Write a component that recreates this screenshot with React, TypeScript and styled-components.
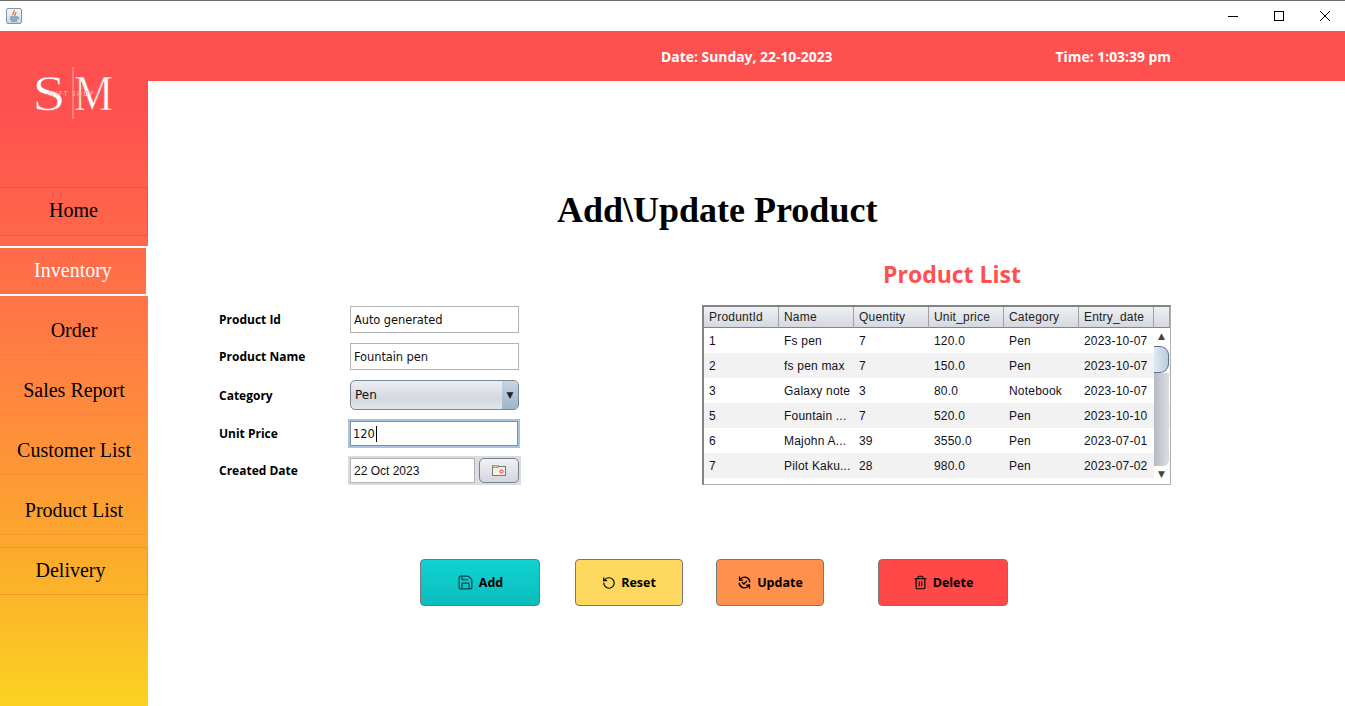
import React from "react";
import styled, { createGlobalStyle } from "styled-components";
import { Save, RotateCcw, Trash2 } from "lucide-react";

const Global = createGlobalStyle`
  html, body { margin: 0; padding: 0; background: #fff; }
  body { overflow: hidden; }
`;

const rows = [
  { id: "1", name: "Fs pen", qty: "7", price: "120.0", cat: "Pen", date: "2023-10-07" },
  { id: "2", name: "fs pen max", qty: "7", price: "150.0", cat: "Pen", date: "2023-10-07" },
  { id: "3", name: "Galaxy note", qty: "3", price: "80.0", cat: "Notebook", date: "2023-10-07" },
  { id: "5", name: "Fountain ...", qty: "7", price: "520.0", cat: "Pen", date: "2023-10-10" },
  { id: "6", name: "Majohn A...", qty: "39", price: "3550.0", cat: "Pen", date: "2023-07-01" },
  { id: "7", name: "Pilot Kaku...", qty: "28", price: "980.0", cat: "Pen", date: "2023-07-02" },
];

const columns = ["ProduntId", "Name", "Quentity", "Unit_price", "Category", "Entry_date"];

const Window = styled.div`
  width: 1345px;
  height: 706px;
  display: flex;
  flex-direction: column;
  overflow: hidden;
`;

const TitleBar = styled.div`
  height: 31px;
  flex: none;
  border-top: 1px solid #6e6e6e;
  box-sizing: border-box;
  background: #fff;
  display: flex;
  align-items: center;
  justify-content: space-between;
  padding: 0 15px 1px 6px;
`;

const AppIcon = styled.div`
  width: 16px;
  height: 16px;
  box-sizing: border-box;
  border: 1px solid #7d97ad;
  border-radius: 2px;
  background: linear-gradient(#f4f7fa, #c9d6e2);
  display: flex;
`;

const WindowButtons = styled.div`
  display: flex;
  gap: 36px;
  align-items: center;
`;

const Body = styled.div`
  flex: 1;
  display: flex;
  min-height: 0;
`;

const Sidebar = styled.nav`
  width: 148px;
  flex: none;
  display: flex;
  flex-direction: column;
  background: linear-gradient(180deg, #ff5050 0%, #ff5050 12%, #ff7a45 45%, #fca62e 75%, #fbd222 100%);
`;

const LogoArea = styled.div`
  height: 156px;
  flex: none;
  display: flex;
  padding: 34px 0 0 33px;
  box-sizing: border-box;
`;

const NavItem = styled.div<{ $variant?: "home" | "delivery" }>`
  height: ${(p) => (p.$variant === "home" ? 49 : 48)}px;
  flex: none;
  margin-bottom: ${(p) => (p.$variant === "home" ? 11 : 12)}px;
  box-sizing: border-box;
  display: flex;
  align-items: center;
  justify-content: center;
  padding-bottom: ${(p) => (p.$variant ? 2 : 0)}px;
  padding-right: ${(p) => (p.$variant === "delivery" ? 6 : 0)}px;
  font: 20px "Liberation Serif", serif;
  color: #000;
  ${(p) =>
    p.$variant === "home"
      ? "border: 1px solid rgba(255, 60, 75, 0.55); border-left: none;"
      : p.$variant === "delivery"
      ? "border: 1px solid rgba(240, 140, 50, 0.75); border-left: none;"
      : "border-bottom: 1px solid rgba(240, 90, 60, 0.2);"}
`;

const ActiveItem = styled.div`
  height: 50px;
  width: 146px;
  flex: none;
  margin: -1px 0 11px;
  box-sizing: border-box;
  border-top: 2px solid #fff;
  border-bottom: 2px solid #fff;
  box-shadow: 2px 0 0 #fff;
  display: flex;
  align-items: center;
  justify-content: center;
  padding-bottom: 2px;
  font: 20px "Liberation Serif", serif;
  color: #fff;
`;

const Main = styled.div`
  flex: 1;
  display: flex;
  flex-direction: column;
  min-width: 0;
`;

const Header = styled.header`
  height: 50px;
  flex: none;
  background: #ff5050;
  display: flex;
  align-items: center;
  color: #fff;
  font: bold 13.9px "Open Sans", sans-serif;
  padding: 1px 0 0 513px;
  box-sizing: border-box;
`;

const HeaderTime = styled.span`
  margin-left: 223px;
`;

const Title = styled.h1`
  margin: 106px 0 0 409px;
  font: bold 36px/46px "Liberation Serif", serif;
  color: #000;
  white-space: nowrap;
`;

const Content = styled.div`
  display: flex;
  margin: 23px 0 0 71px;
`;

const Form = styled.div`
  width: 483px;
  flex: none;
  padding-top: 50px;
  box-sizing: border-box;
`;

const FormRow = styled.div<{ $h: number; $gap: number }>`
  height: ${(p) => p.$h}px;
  margin-bottom: ${(p) => p.$gap}px;
  display: flex;
  align-items: center;
`;

const Label = styled.label`
  width: 130px;
  flex: none;
  font: bold 12px "Open Sans", sans-serif;
  color: #000;
`;

const Field = styled.div<{ $focus?: boolean }>`
  width: ${(p) => (p.$focus ? 172 : 169)}px;
  height: 100%;
  flex: none;
  margin-left: ${(p) => (p.$focus ? "-1px" : "1px")};
  box-sizing: border-box;
  background: #fff;
  border: ${(p) => (p.$focus ? "2px solid #a6c4e2" : "1px solid #b4b4b4")};
  ${(p) => (p.$focus ? "outline: 1px solid #878d95; outline-offset: -3px;" : "")}
  display: flex;
  align-items: center;
  padding-left: 3px;
  font: 11.5px "DejaVu Sans", sans-serif;
  letter-spacing: -0.1px;
  color: #111;
`;

const Caret = styled.span`
  width: 1px;
  height: 16px;
  background: #000;
  margin-left: 1px;
`;

const Select = styled.div`
  width: 169px;
  height: 30px;
  margin-left: 1px;
  box-sizing: border-box;
  border: 1px solid #7b8794;
  border-radius: 5px;
  background: linear-gradient(#eceef2, #d4d8e0 60%, #e2e5ea);
  display: flex;
  align-items: center;
  justify-content: space-between;
  padding-left: 4px;
  overflow: hidden;
  font: 12px "DejaVu Sans", sans-serif;
  color: #111;
`;

const SelectArrow = styled.div`
  width: 16px;
  height: 100%;
  background: linear-gradient(#c6d5e2, #9fb5c9);
  display: flex;
  align-items: center;
  justify-content: center;
  font: 9px "DejaVu Sans", sans-serif;
  color: #222;
`;

const DatePicker = styled.div`
  width: 173px;
  height: 100%;
  margin-left: -1px;
  box-sizing: border-box;
  background: #d9dde3;
  padding: 2px;
  display: flex;
  justify-content: space-between;
`;

const DateInput = styled.div`
  width: 125px;
  box-sizing: border-box;
  background: #fff;
  border: 1px solid #b4b4b4;
  padding-left: 3px;
  display: flex;
  align-items: center;
  font: 12px "Liberation Sans", sans-serif;
  color: #111;
`;

const DateButton = styled.div`
  width: 40px;
  box-sizing: border-box;
  border: 1px solid #77818c;
  border-radius: 5px;
  background: linear-gradient(#f0f1f4, #d2d6dd);
  display: flex;
  align-items: center;
  justify-content: center;
`;

const TableColumn = styled.div`
  width: 469px;
  flex: none;
  display: flex;
  flex-direction: column;
`;

const ListTitle = styled.h2`
  margin: 0 0 13px 181px;
  height: 36px;
  font: bold 23px/36px "Open Sans", sans-serif;
  color: #ff5050;
  white-space: nowrap;
`;

const TableFrame = styled.div`
  height: 180px;
  position: relative;
  box-sizing: border-box;
  border: 2px solid #858585;
  border-right-width: 1px;
  border-right-color: #b0b0b0;
  border-bottom: 1px solid #b0b0b0;
  background: #fff;
  font: 12px "Liberation Sans", sans-serif;
  letter-spacing: 0.2px;
  color: #10101e;
`;

const Grid = styled.div`
  display: grid;
  grid-template-columns: repeat(6, 75px) 1fr;
`;

const HeaderCell = styled.div`
  height: 21px;
  box-sizing: border-box;
  padding: 1px 0 0 5px;
  line-height: 18px;
  background: linear-gradient(#eef0f3, #d5d8df);
  border-right: 1px solid #9a9fa8;
  border-bottom: 1px solid #858585;
  color: #222;
`;

const Cell = styled.div<{ $odd: boolean }>`
  height: 25px;
  line-height: 27px;
  padding-left: 5px;
  white-space: nowrap;
  overflow: hidden;
  background: ${(p) => (p.$odd ? "#f2f2f2" : "#fff")};
`;

const ScrollTrack = styled.div`
  position: absolute;
  top: 21px;
  right: 1px;
  bottom: 0;
  width: 15px;
  display: flex;
  flex-direction: column;
  align-items: center;
  background: #fff;
`;

const ScrollArrow = styled.div`
  height: 18px;
  flex: none;
  font: 9px/16px "DejaVu Sans", sans-serif;
  color: #444;
`;

const ScrollRail = styled.div`
  flex: 1;
  width: 100%;
  background: linear-gradient(90deg, #b6bac3, #dcdee3);
  border-radius: 0 0 6px 0;
`;

const ScrollThumb = styled.div`
  height: 27px;
  width: 100%;
  flex: none;
  box-sizing: border-box;
  background: linear-gradient(90deg, #dfe9f3, #b9cde0);
  border: 1px solid #5e7388;
  border-left: none;
  border-radius: 0 9px 9px 0;
`;

const Actions = styled.div`
  display: flex;
  margin: 74px 0 0 272px;
`;

const ActionButton = styled.button<{ $w: number; $top: string; $bottom: string; $ml: number }>`
  width: ${(p) => p.$w}px;
  height: 47px;
  margin-left: ${(p) => p.$ml}px;
  padding: 0;
  box-sizing: border-box;
  border: 1px solid #777;
  border-radius: 4px;
  background: linear-gradient(${(p) => p.$top}, ${(p) => p.$bottom});
  display: flex;
  align-items: center;
  justify-content: center;
  gap: 5px;
  font: bold 12.5px "Open Sans", sans-serif;
  color: #000;
`;

const Logo = () => (
  <svg width="82" height="56" viewBox="0 0 82 56" fill="none">
    <line x1="40" y1="2" x2="40" y2="54" stroke="#ffb0b0" strokeWidth="1" />
    <text transform="translate(-1 45) scale(1.22 1)" fontFamily="Liberation Serif, serif" fontSize="50" fill="#fff" stroke="#ff5050" strokeWidth="0.7">S</text>
    <text transform="translate(41 45) scale(0.88 1)" fontFamily="Liberation Serif, serif" fontSize="50" fill="#fff" stroke="#ff5050" strokeWidth="0.7">M</text>
    <text x="16" y="31" fontFamily="Open Sans, sans-serif" fontSize="6.5" fontWeight="600" fill="#ffb4b4" letterSpacing="1.5">GIFT SHOP</text>
  </svg>
);

const JavaIcon = () => (
  <svg width="14" height="14" viewBox="0 0 14 14" fill="none">
    <path d="M7 1C8 3 5 4 6 6M9 3C9 5 7 5 8 7" stroke="#e8661c" strokeWidth="1.2" />
    <path d="M3 8h7M3 10h7M4 12h6" stroke="#4a7194" strokeWidth="1" />
    <path d="M10 8c2 0 2 2 0 2" stroke="#4a7194" strokeWidth="1" />
  </svg>
);

const CalendarIcon = () => (
  <svg width="15" height="11" viewBox="0 0 15 11" fill="none">
    <rect x="0.5" y="1.5" width="13" height="9" fill="#f6f1e6" stroke="#77777a" />
    <rect x="0.5" y="0.5" width="6" height="2" fill="#d9c79c" stroke="#77777a" strokeWidth="0.6" />
    <circle cx="9.5" cy="6.5" r="1.6" stroke="#d33" strokeWidth="1" />
  </svg>
);

const UpdateIcon = () => (
  <svg width="15" height="15" viewBox="0 0 24 24" fill="none" stroke="#000" strokeWidth="2" strokeLinecap="round" strokeLinejoin="round">
    <path d="M20.5 11A8.5 8.5 0 0 0 6 6l-2 2" />
    <path d="M4 3v5h5" />
    <path d="M3.5 13A8.5 8.5 0 0 0 18 18l2-2" />
    <path d="M20 21v-5h-5" />
    <path d="M8.5 12l2.5 2.5 4.5-4.5" />
  </svg>
);

const App = () => (
  <Window>
    <Global />
    <TitleBar>
      <AppIcon>
        <JavaIcon />
      </AppIcon>
      <WindowButtons>
        <svg width="10" height="10" viewBox="0 0 10 10">
          <path d="M0 5.5h10" stroke="#000" strokeWidth="1" />
        </svg>
        <svg width="10" height="10" viewBox="0 0 10 10">
          <rect x="0.5" y="0.5" width="9" height="9" fill="none" stroke="#000" strokeWidth="1" />
        </svg>
        <svg width="10" height="10" viewBox="0 0 10 10">
          <path d="M0 0L10 10M10 0L0 10" stroke="#000" strokeWidth="1" />
        </svg>
      </WindowButtons>
    </TitleBar>
    <Body>
      <Sidebar>
        <LogoArea>
          <Logo />
        </LogoArea>
        <NavItem $variant="home">Home</NavItem>
        <ActiveItem>Inventory</ActiveItem>
        <NavItem>Order</NavItem>
        <NavItem>Sales Report</NavItem>
        <NavItem>Customer List</NavItem>
        <NavItem>Product List</NavItem>
        <NavItem $variant="delivery">Delivery</NavItem>
      </Sidebar>
      <Main>
        <Header>
          <span>Date: Sunday, 22-10-2023</span>
          <HeaderTime>Time: 1:03:39 pm</HeaderTime>
        </Header>
        <Title>Add\Update Product</Title>
        <Content>
          <Form>
            <FormRow $h={27} $gap={10}>
              <Label>Product Id</Label>
              <Field>Auto generated</Field>
            </FormRow>
            <FormRow $h={27} $gap={10}>
              <Label>Product Name</Label>
              <Field>Fountain pen</Field>
            </FormRow>
            <FormRow $h={30} $gap={9}>
              <Label>Category</Label>
              <Select>
                Pen
                <SelectArrow>▼</SelectArrow>
              </Select>
            </FormRow>
            <FormRow $h={29} $gap={8}>
              <Label>Unit Price</Label>
              <Field $focus>
                120
                <Caret />
              </Field>
            </FormRow>
            <FormRow $h={29} $gap={0}>
              <Label>Created Date</Label>
              <DatePicker>
                <DateInput>22 Oct 2023</DateInput>
                <DateButton>
                  <CalendarIcon />
                </DateButton>
              </DatePicker>
            </FormRow>
          </Form>
          <TableColumn>
            <ListTitle>Product List</ListTitle>
            <TableFrame>
              <Grid>
                {columns.map((c) => (
                  <HeaderCell key={c}>{c}</HeaderCell>
                ))}
                <HeaderCell />
                {rows.map((r, i) => (
                  <React.Fragment key={r.id}>
                    <Cell $odd={i % 2 === 1}>{r.id}</Cell>
                    <Cell $odd={i % 2 === 1}>{r.name}</Cell>
                    <Cell $odd={i % 2 === 1}>{r.qty}</Cell>
                    <Cell $odd={i % 2 === 1}>{r.price}</Cell>
                    <Cell $odd={i % 2 === 1}>{r.cat}</Cell>
                    <Cell $odd={i % 2 === 1}>{r.date}</Cell>
                    <Cell $odd={i % 2 === 1} />
                  </React.Fragment>
                ))}
              </Grid>
              <ScrollTrack>
                <ScrollArrow>▲</ScrollArrow>
                <ScrollThumb />
                <ScrollRail />
                <ScrollArrow>▼</ScrollArrow>
              </ScrollTrack>
            </TableFrame>
          </TableColumn>
        </Content>
        <Actions>
          <ActionButton $w={120} $ml={0} $top="#12d2d2" $bottom="#0bbcbc">
            <Save size={17} strokeWidth={1.7} color="#0a4a50" />
            Add
          </ActionButton>
          <ActionButton $w={108} $ml={35} $top="#ffd95f" $bottom="#ffd95f">
            <RotateCcw size={14} strokeWidth={2} />
            Reset
          </ActionButton>
          <ActionButton $w={108} $ml={33} $top="#ff914d" $bottom="#ff914d">
            <UpdateIcon />
            Update
          </ActionButton>
          <ActionButton $w={130} $ml={54} $top="#ff4848" $bottom="#ff4848">
            <Trash2 size={15} strokeWidth={1.8} />
            Delete
          </ActionButton>
        </Actions>
      </Main>
    </Body>
  </Window>
);

export default App;
